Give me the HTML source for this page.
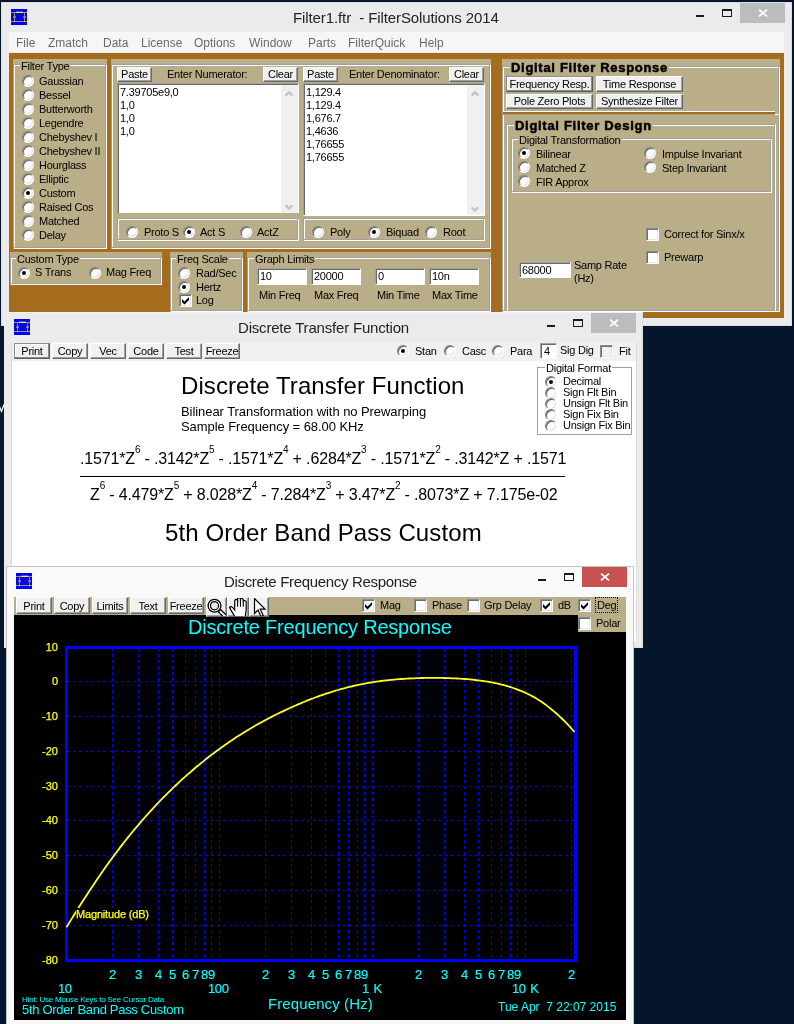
<!DOCTYPE html><html><head><meta charset="utf-8"><title>FilterSolutions</title><style>
html,body{margin:0;padding:0;background:#04152c;width:794px;height:1024px;overflow:hidden}
body{position:relative;font-family:"Liberation Sans",sans-serif}
div,span.t,span.m,span.ttl,span.h,span.big,span.s13,span.eq,span.yl,span.xl,span.xn,span.xa,span.pt,span.hint,span.dt{position:absolute;box-sizing:border-box;white-space:pre}
.t{font:11px/13px "Liberation Sans",sans-serif;color:#000;letter-spacing:-0.25px}
.m{font:12px/14px "Liberation Sans",sans-serif;color:#6a6a6a}
.ttl{font:15px/18px "Liberation Sans",sans-serif;color:#222}
.h{font:bold 13px/15px "Liberation Sans",sans-serif;color:#000;letter-spacing:0.7px;-webkit-text-stroke:0.5px #000}
.big{font:24px/28px "Liberation Sans",sans-serif;color:#000}
.s13{font:13px/15px "Liberation Sans",sans-serif;color:#000;letter-spacing:-0.065px}
.eq{font:16px/20px "Liberation Sans",sans-serif;color:#000;letter-spacing:-0.15px}
.eq sup{font-size:10px;line-height:0;vertical-align:11px;position:relative;letter-spacing:-0.3px}
.yl{font:11px/13px "Liberation Sans",sans-serif;color:#ffff10;-webkit-text-stroke:0.25px #ffff10}
.xl{font:13px/15px "Liberation Sans",sans-serif;color:#08ffff;letter-spacing:-0.31px}
.xn{font:13px/15px "Liberation Sans",sans-serif;color:#08ffff;word-spacing:1.5px;letter-spacing:-0.4px;-webkit-text-stroke:0.2px #08ffff}
.dt{font:12px/14px "Liberation Sans",sans-serif;color:#08ffff}
.xa{font:15px/18px "Liberation Sans",sans-serif;color:#08ffff}
.pt{font:20px/22px "Liberation Sans",sans-serif;color:#08ffff;letter-spacing:-0.2px}
.hint{font:8px/9px "Liberation Sans",sans-serif;color:#08ffff;letter-spacing:-0.2px}
.r{width:12px;height:12px;border-radius:50%;background:#fff;border:1px solid;border-color:#808080 #fff #fff #808080;box-shadow:inset 1px 1px 0 #606060,inset -1px -1px 0 #e0e0e0}
.r i{position:absolute;left:3px;top:3px;width:4px;height:4px;border-radius:50%;background:#000}
.c{width:13px;height:13px;background:#fff;border:1px solid;border-color:#8c8c8c #fff #fff #8c8c8c;box-shadow:inset 1px 1px 0 #6e6e6e,inset -1px -1px 0 #e6e6e6}
.b{background:#f0f0f0;border:1px solid;border-color:#fff #696969 #696969 #fff;box-shadow:inset -1px -1px 0 #a0a0a0;font:11px "Liberation Sans",sans-serif;letter-spacing:-0.25px;color:#000;text-align:center;overflow:hidden}
.bd{border-color:#8c8c8c #5a5a5a #5a5a5a #8c8c8c;box-shadow:inset -1px -1px 0 #8c8c8c,inset 1px 1px 0 #fff}
.f{background:#fff;border:1px solid;border-color:#a0a0a0 #fff #fff #a0a0a0;box-shadow:inset 1px 1px 0 #696969}
.g{border:1px solid #a0a0a0;box-shadow:1px 1px 0 #fff,inset 1px 1px 0 #fff}
.sb{right:0;top:1px;bottom:0;width:17px;background:#f0f0f0}
</style></head><body><div id="w" style="left:0;top:0;width:794px;height:1024px;will-change:transform">
<div class="" style="left:1px;top:2px;width:791px;height:324px;background:#ebebeb;border:1px solid #dcdcdc"></div>
<svg style="position:absolute;left:11px;top:9px" width="16" height="16" viewBox="0 0 16 16"><rect width="16" height="16" fill="#0000ff"/><path d="M0 3.5H16M0 12.5H16M3.5 3.5V12.5M13.5 3.5V12.5" stroke="#9c9650" stroke-width="1" fill="none"/><path d="M5 3.3H12" stroke="#ffff00" stroke-width="1.2"/><circle cx="3.5" cy="8" r="1.3" fill="#a8a050"/><circle cx="13.5" cy="8" r="1.3" fill="#a8a050"/><rect x="3" y="12" width="1" height="1" fill="#e0e020"/><rect x="13" y="12" width="1" height="1" fill="#e0e020"/></svg>
<span class="ttl" style="left:293px;top:9px;letter-spacing:-0.1px">Filter1.ftr  - FilterSolutions 2014</span>
<div class="" style="left:696px;top:15px;width:8px;height:2px;background:#1a1a1a"></div>
<div class="" style="left:722px;top:9px;width:10px;height:8px;border:1px solid #1a1a1a;border-top-width:2px"></div>
<div class="" style="left:740px;top:3px;width:45px;height:20px;background:#bcbcbc"></div>
<svg style="position:absolute;left:757.5px;top:9.0px" width="10" height="8" viewBox="0 0 10 8"><path d="M1 0.6L9 7.4M9 0.6L1 7.4" stroke="#fff" stroke-width="1.8"/></svg>
<div class="" style="left:9px;top:32px;width:775px;height:20px;background:#f5f6f7"></div>
<span class="m" style="left:16px;top:36px;">File</span>
<span class="m" style="left:48px;top:36px;">Zmatch</span>
<span class="m" style="left:103px;top:36px;">Data</span>
<span class="m" style="left:141px;top:36px;">License</span>
<span class="m" style="left:194px;top:36px;">Options</span>
<span class="m" style="left:249px;top:36px;">Window</span>
<span class="m" style="left:308px;top:36px;">Parts</span>
<span class="m" style="left:348px;top:36px;">FilterQuick</span>
<span class="m" style="left:419px;top:36px;">Help</span>
<div class="" style="left:9px;top:53px;width:775px;height:265px;background:#a66c1e"></div>
<div class="" style="left:13px;top:59px;width:94px;height:190px;background:#b9ae87"></div>
<div class="g" style="left:13px;top:64px;width:93px;height:184px;"><span class="t" style="left:6px;top:-5px;background:#b9ae87;padding:0 1px">Filter Type</span></div>
<div class="r" style="left:22px;top:75px"></div>
<span class="t" style="left:39px;top:75px;">Gaussian</span>
<div class="r" style="left:22px;top:89px"></div>
<span class="t" style="left:39px;top:89px;">Bessel</span>
<div class="r" style="left:22px;top:103px"></div>
<span class="t" style="left:39px;top:103px;">Butterworth</span>
<div class="r" style="left:22px;top:117px"></div>
<span class="t" style="left:39px;top:117px;">Legendre</span>
<div class="r" style="left:22px;top:131px"></div>
<span class="t" style="left:39px;top:131px;">Chebyshev I</span>
<div class="r" style="left:22px;top:145px"></div>
<span class="t" style="left:39px;top:145px;">Chebyshev II</span>
<div class="r" style="left:22px;top:159px"></div>
<span class="t" style="left:39px;top:159px;">Hourglass</span>
<div class="r" style="left:22px;top:173px"></div>
<span class="t" style="left:39px;top:173px;">Elliptic</span>
<div class="r" style="left:22px;top:187px"><i></i></div>
<span class="t" style="left:39px;top:187px;">Custom</span>
<div class="r" style="left:22px;top:201px"></div>
<span class="t" style="left:39px;top:201px;">Raised Cos</span>
<div class="r" style="left:22px;top:215px"></div>
<span class="t" style="left:39px;top:215px;">Matched</span>
<div class="r" style="left:22px;top:229px"></div>
<span class="t" style="left:39px;top:229px;">Delay</span>
<div class="" style="left:111px;top:59px;width:380px;height:190px;background:#b9ae87"></div>
<div class="g" style="left:111px;top:64px;width:379px;height:184px;"></div>
<div class="b" style="left:117px;top:67px;width:35px;height:15px;line-height:13px;">Paste</div>
<span class="t" style="left:167px;top:68px;">Enter Numerator:</span>
<div class="b" style="left:263px;top:67px;width:35px;height:15px;line-height:13px;">Clear</div>
<div class="f" style="left:117px;top:83px;width:182px;height:130px;border-bottom:none"><span class="t" style="left:2px;top:2px;line-height:13px">7.39705e9,0
1,0
1,0
1,0</span><div class="sb"><svg width="17" height="20" viewBox="0 0 17 20" style="position:absolute;left:0;top:0"><path d="M4.6 10.6L8 7.2L11.4 10.6" stroke="#c2c2c2" stroke-width="2.2" fill="none"/></svg><svg width="17" height="12" viewBox="0 0 17 12" style="position:absolute;left:0;bottom:0"><path d="M4.6 4.2L8 7.6L11.4 4.2" stroke="#c2c2c2" stroke-width="2.2" fill="none"/></svg></div></div>
<div class="b" style="left:303px;top:67px;width:35px;height:15px;line-height:13px;">Paste</div>
<span class="t" style="left:349px;top:68px;">Enter Denominator:</span>
<div class="b" style="left:449px;top:67px;width:35px;height:15px;line-height:13px;">Clear</div>
<div class="f" style="left:303px;top:83px;width:182px;height:133px;"><span class="t" style="left:2px;top:2px;line-height:13px">1,129.4
1,129.4
1,676.7
1,4636
1,76655
1,76655</span><div class="sb"><svg width="17" height="20" viewBox="0 0 17 20" style="position:absolute;left:0;top:0"><path d="M4.6 10.6L8 7.2L11.4 10.6" stroke="#c2c2c2" stroke-width="2.2" fill="none"/></svg><svg width="17" height="12" viewBox="0 0 17 12" style="position:absolute;left:0;bottom:0"><path d="M4.6 4.2L8 7.6L11.4 4.2" stroke="#c2c2c2" stroke-width="2.2" fill="none"/></svg></div></div>
<div class="g" style="left:117px;top:218px;width:181px;height:22px;"></div>
<div class="r" style="left:126px;top:226px"></div>
<span class="t" style="left:144px;top:226px;">Proto S</span>
<div class="r" style="left:183px;top:226px"><i></i></div>
<span class="t" style="left:200px;top:226px;">Act S</span>
<div class="r" style="left:240px;top:226px"></div>
<span class="t" style="left:257px;top:226px;">ActZ</span>
<div class="g" style="left:303px;top:218px;width:181px;height:22px;"></div>
<div class="r" style="left:312px;top:226px"></div>
<span class="t" style="left:330px;top:226px;">Poly</span>
<div class="r" style="left:368px;top:226px"><i></i></div>
<span class="t" style="left:386px;top:226px;">Biquad</span>
<div class="r" style="left:425px;top:226px"></div>
<span class="t" style="left:443px;top:226px;">Root</span>
<div class="" style="left:10px;top:252px;width:152px;height:33px;background:#b9ae87"></div>
<div class="g" style="left:10px;top:257px;width:151px;height:27px;"><span class="t" style="left:5px;top:-5px;background:#b9ae87;padding:0 1px">Custom Type</span></div>
<div class="r" style="left:18px;top:267px"><i></i></div>
<span class="t" style="left:35px;top:266px;">S Trans</span>
<div class="r" style="left:89px;top:267px"></div>
<span class="t" style="left:106px;top:266px;">Mag Freq</span>
<div class="" style="left:170px;top:252px;width:73px;height:60px;background:#b9ae87"></div>
<div class="g" style="left:170px;top:257px;width:72px;height:54px;"><span class="t" style="left:5px;top:-5px;background:#b9ae87;padding:0 1px">Freq Scale</span></div>
<div class="r" style="left:178px;top:267px"></div>
<span class="t" style="left:196px;top:267px;">Rad/Sec</span>
<div class="r" style="left:178px;top:281px"><i></i></div>
<span class="t" style="left:196px;top:281px;">Hertz</span>
<div class="c" style="left:179px;top:294px;background:#fff"><svg width="13" height="13" viewBox="0 0 13 13" style="position:absolute;left:-1px;top:-1px"><path d="M3 5L5.5 7.5L10 3V6L5.5 10.5L3 8Z" fill="#000"/></svg></div>
<span class="t" style="left:196px;top:294px;">Log</span>
<div class="" style="left:247px;top:252px;width:244px;height:60px;background:#b9ae87"></div>
<div class="g" style="left:247px;top:257px;width:243px;height:54px;"><span class="t" style="left:6px;top:-5px;background:#b9ae87;padding:0 1px">Graph Limits</span></div>
<div class="f" style="left:257px;top:268px;width:50px;height:17px;"><span class="t" style="left:2px;top:1px">10</span></div>
<div class="f" style="left:311px;top:268px;width:50px;height:17px;"><span class="t" style="left:2px;top:1px">20000</span></div>
<div class="f" style="left:375px;top:268px;width:50px;height:17px;"><span class="t" style="left:2px;top:1px">0</span></div>
<div class="f" style="left:429px;top:268px;width:50px;height:17px;"><span class="t" style="left:2px;top:1px">10n</span></div>
<span class="t" style="left:259px;top:289px;">Min Freq</span>
<span class="t" style="left:314px;top:289px;">Max Freq</span>
<span class="t" style="left:377px;top:289px;">Min Time</span>
<span class="t" style="left:432px;top:289px;">Max Time</span>
<div class="" style="left:502px;top:59px;width:278px;height:253px;background:#b9ae87"></div>
<div class="g" style="left:502px;top:66px;width:277px;height:245px;"><span class="h" style="left:7px;top:-7px;background:#b9ae87;padding:0 1px">Digital Filter Response</span></div>
<div class="" style="left:503px;top:111px;width:272px;height:1px;background:#fff"></div>
<div class="" style="left:503px;top:112px;width:272px;height:2px;background:#a66c1e"></div>
<div class="" style="left:503px;top:114px;width:272px;height:1px;background:#a0a0a0"></div>
<div class="" style="left:775px;top:114px;width:4px;height:1px;background:#fff"></div>
<div class="b bd" style="left:506px;top:76px;width:87px;height:16px;line-height:14px;">Frequency Resp.</div>
<div class="b" style="left:596px;top:76px;width:87px;height:16px;line-height:14px;">Time Response</div>
<div class="b" style="left:506px;top:94px;width:87px;height:15px;line-height:13px;">Pole Zero Plots</div>
<div class="b" style="left:596px;top:94px;width:87px;height:15px;line-height:13px;">Synthesize Filter</div>
<div class="g" style="left:506px;top:124px;width:269px;height:187px;border-bottom:none;box-shadow:1px 0 0 #fff,inset 1px 1px 0 #fff"><span class="h" style="left:7px;top:-7px;background:#b9ae87;padding:0 1px">Digital Filter Design</span></div>
<div class="g" style="left:511px;top:138px;width:260px;height:54px;"><span class="t" style="left:6px;top:-5px;background:#b9ae87;padding:0 1px">Digital Transformation</span></div>
<div class="r" style="left:518px;top:147px"><i></i></div>
<span class="t" style="left:536px;top:148px;">Bilinear</span>
<div class="r" style="left:518px;top:161px"></div>
<span class="t" style="left:536px;top:162px;">Matched Z</span>
<div class="r" style="left:518px;top:175px"></div>
<span class="t" style="left:536px;top:176px;">FIR Approx</span>
<div class="r" style="left:644px;top:147px"></div>
<span class="t" style="left:662px;top:148px;">Impulse Invariant</span>
<div class="r" style="left:644px;top:161px"></div>
<span class="t" style="left:662px;top:162px;">Step Invariant</span>
<div class="c" style="left:646px;top:228px;background:#fff"></div>
<span class="t" style="left:664px;top:228px;">Correct for Sinx/x</span>
<div class="c" style="left:646px;top:251px;background:#fff"></div>
<span class="t" style="left:664px;top:251px;">Prewarp</span>
<div class="f" style="left:519px;top:262px;width:52px;height:16px;"><span class="t" style="left:2px;top:1px">68000</span></div>
<span class="t" style="left:574px;top:259px;">Samp Rate</span>
<span class="t" style="left:574px;top:272px;">(Hz)</span>
<svg style="position:absolute;left:0;top:400px" width="4" height="16" viewBox="0 0 4 16"><path d="M-1 5.5L1.5 11.5L4 4.5" stroke="#f4f4f4" stroke-width="1.3" fill="none"/></svg>
<div class="" style="left:4px;top:312px;width:639px;height:336px;background:#ebebeb;border:1px solid #dcdcdc;border-color:#f2f2f2 #dcdcdc #dcdcdc #eeeeee"></div>
<svg style="position:absolute;left:14px;top:319px" width="16" height="16" viewBox="0 0 16 16"><rect width="16" height="16" fill="#0000ff"/><path d="M0 3.5H16M0 12.5H16M3.5 3.5V12.5M13.5 3.5V12.5" stroke="#9c9650" stroke-width="1" fill="none"/><path d="M5 3.3H12" stroke="#ffff00" stroke-width="1.2"/><circle cx="3.5" cy="8" r="1.3" fill="#a8a050"/><circle cx="13.5" cy="8" r="1.3" fill="#a8a050"/><rect x="3" y="12" width="1" height="1" fill="#e0e020"/><rect x="13" y="12" width="1" height="1" fill="#e0e020"/></svg>
<span class="ttl" style="left:238px;top:319px;letter-spacing:-0.19px">Discrete Transfer Function</span>
<div class="" style="left:547px;top:325px;width:8px;height:2px;background:#1a1a1a"></div>
<div class="" style="left:573px;top:319px;width:10px;height:8px;border:1px solid #1a1a1a;border-top-width:2px"></div>
<div class="" style="left:591px;top:313px;width:45px;height:20px;background:#bcbcbc"></div>
<svg style="position:absolute;left:608.5px;top:319.0px" width="10" height="8" viewBox="0 0 10 8"><path d="M1 0.6L9 7.4M9 0.6L1 7.4" stroke="#fff" stroke-width="1.8"/></svg>
<div class="" style="left:12px;top:342px;width:624px;height:19px;background:#f0f0f0"></div>
<div class="b bd" style="left:14px;top:343px;width:36px;height:16px;line-height:14px;">Print</div>
<div class="b" style="left:52px;top:343px;width:36px;height:16px;line-height:14px;">Copy</div>
<div class="b" style="left:90px;top:343px;width:36px;height:16px;line-height:14px;">Vec</div>
<div class="b" style="left:128px;top:343px;width:36px;height:16px;line-height:14px;">Code</div>
<div class="b" style="left:166px;top:343px;width:36px;height:16px;line-height:14px;">Test</div>
<div class="b" style="left:204px;top:343px;width:36px;height:16px;line-height:14px;">Freeze</div>
<div class="r" style="left:397px;top:345px"><i></i></div>
<span class="t" style="left:415px;top:345px;">Stan</span>
<div class="r" style="left:444px;top:345px"></div>
<span class="t" style="left:462px;top:345px;">Casc</span>
<div class="r" style="left:492px;top:345px"></div>
<span class="t" style="left:510px;top:345px;">Para</span>
<div class="f" style="left:540px;top:343px;width:17px;height:16px;"><span class="t" style="left:3px;top:1px">4</span></div>
<span class="t" style="left:560px;top:344px;">Sig Dig</span>
<div class="c" style="left:600px;top:345px;background:#f0f0f0"></div>
<span class="t" style="left:619px;top:345px;">Fit</span>
<div class="" style="left:11px;top:342px;width:1px;height:299px;background:#dcdcdc"></div>
<div class="" style="left:636px;top:342px;width:1px;height:299px;background:#dcdcdc"></div>
<div class="" style="left:12px;top:361px;width:624px;height:280px;background:#fff"></div>
<span class="big" style="left:181px;top:372px;letter-spacing:0.08px">Discrete Transfer Function</span>
<span class="s13" style="left:181px;top:404px;">Bilinear Transformation with no Prewarping</span>
<span class="s13" style="left:181px;top:419px;">Sample Frequency = 68.00 KHz</span>
<span class="eq" style="left:80px;top:449px;">.1571*Z<sup>6</sup> - .3142*Z<sup>5</sup> - .1571*Z<sup>4</sup> + .6284*Z<sup>3</sup> - .1571*Z<sup>2</sup> - .3142*Z + .1571</span>
<div class="" style="left:80px;top:476px;width:485px;height:1px;background:#000"></div>
<span class="eq" style="left:90px;top:485px;">Z<sup>6</sup> - 4.479*Z<sup>5</sup> + 8.028*Z<sup>4</sup> - 7.284*Z<sup>3</sup> + 3.47*Z<sup>2</sup> - .8073*Z + 7.175e-02</span>
<span class="big" style="left:165px;top:519px;letter-spacing:0.13px">5th Order Band Pass Custom</span>
<div class="g" style="left:537px;top:367px;width:95px;height:68px;border-color:#a0a0a0;box-shadow:none"><span class="t" style="left:7px;top:-6px;background:#fff;padding:0 1px">Digital Format</span></div>
<div class="r" style="left:545px;top:376px"><i></i></div>
<span class="t" style="left:563px;top:375px;">Decimal</span>
<div class="r" style="left:545px;top:387px"></div>
<span class="t" style="left:563px;top:386px;">Sign Flt Bin</span>
<div class="r" style="left:545px;top:398px"></div>
<span class="t" style="left:563px;top:397px;">Unsign Flt Bin</span>
<div class="r" style="left:545px;top:409px"></div>
<span class="t" style="left:563px;top:408px;">Sign Fix Bin</span>
<div class="r" style="left:545px;top:420px"></div>
<span class="t" style="left:563px;top:419px;">Unsign Fix Bin</span>
<div class="" style="left:6px;top:566px;width:628px;height:460px;background:#f9f9f9;border:1px solid #c4c4c4"></div>
<svg style="position:absolute;left:16px;top:573px" width="16" height="16" viewBox="0 0 16 16"><rect width="16" height="16" fill="#0000ff"/><path d="M0 3.5H16M0 12.5H16M3.5 3.5V12.5M13.5 3.5V12.5" stroke="#9c9650" stroke-width="1" fill="none"/><path d="M5 3.3H12" stroke="#ffff00" stroke-width="1.2"/><circle cx="3.5" cy="8" r="1.3" fill="#a8a050"/><circle cx="13.5" cy="8" r="1.3" fill="#a8a050"/><rect x="3" y="12" width="1" height="1" fill="#e0e020"/><rect x="13" y="12" width="1" height="1" fill="#e0e020"/></svg>
<span class="ttl" style="left:224px;top:573px;letter-spacing:-0.33px">Discrete Frequency Response</span>
<div class="" style="left:538px;top:579px;width:8px;height:2px;background:#1a1a1a"></div>
<div class="" style="left:564px;top:573px;width:10px;height:8px;border:1px solid #1a1a1a;border-top-width:2px"></div>
<div class="" style="left:582px;top:567px;width:45px;height:20px;background:#c75050"></div>
<svg style="position:absolute;left:599.5px;top:573.0px" width="10" height="8" viewBox="0 0 10 8"><path d="M1 0.6L9 7.4M9 0.6L1 7.4" stroke="#fff" stroke-width="1.8"/></svg>
<div class="" style="left:14px;top:597px;width:612px;height:18px;background:#b9ae87"></div>
<div class="b" style="left:16px;top:597px;width:36px;height:17px;line-height:15px;padding-top:1px">Print</div>
<div class="b" style="left:54px;top:597px;width:36px;height:17px;line-height:15px;padding-top:1px">Copy</div>
<div class="b" style="left:92px;top:597px;width:36px;height:17px;line-height:15px;padding-top:1px">Limits</div>
<div class="b" style="left:130px;top:597px;width:36px;height:17px;line-height:15px;padding-top:1px">Text</div>
<div class="b" style="left:168px;top:597px;width:36px;height:17px;line-height:15px;padding-top:1px">Freeze</div>
<div class="c" style="left:362px;top:599px;background:#fff"><svg width="13" height="13" viewBox="0 0 13 13" style="position:absolute;left:-1px;top:-1px"><path d="M3 5L5.5 7.5L10 3V6L5.5 10.5L3 8Z" fill="#000"/></svg></div>
<span class="t" style="left:380px;top:599px;">Mag</span>
<div class="c" style="left:414px;top:599px;background:#fff"></div>
<span class="t" style="left:432px;top:599px;">Phase</span>
<div class="c" style="left:467px;top:599px;background:#fff"></div>
<span class="t" style="left:484px;top:599px;">Grp Delay</span>
<div class="c" style="left:540px;top:599px;background:#fff"><svg width="13" height="13" viewBox="0 0 13 13" style="position:absolute;left:-1px;top:-1px"><path d="M3 5L5.5 7.5L10 3V6L5.5 10.5L3 8Z" fill="#000"/></svg></div>
<span class="t" style="left:558px;top:599px;">dB</span>
<div class="c" style="left:578px;top:599px;background:#fff"><svg width="13" height="13" viewBox="0 0 13 13" style="position:absolute;left:-1px;top:-1px"><path d="M3 5L5.5 7.5L10 3V6L5.5 10.5L3 8Z" fill="#000"/></svg></div>
<span class="t" style="left:597px;top:599px;">Deg</span>
<div class="" style="left:595px;top:597px;width:23px;height:16px;border:1px dotted #000"></div>
<div class="" style="left:14px;top:615px;width:612px;height:405px;background:#000"></div>
<div class="" style="left:578px;top:615px;width:48px;height:17px;background:#b9ae87"></div>
<div class="c" style="left:578px;top:617px;background:#fff"></div>
<span class="t" style="left:596px;top:617px;">Polar</span>
<div class="b" style="left:206px;top:597px;width:21px;height:20px"><svg width="20" height="20" viewBox="0 0 20 20" style="position:absolute;left:0;top:-1px"><circle cx="7.5" cy="8.7" r="6.4" fill="#fff" stroke="#000" stroke-width="1.3"/><circle cx="7.5" cy="8.7" r="4.1" fill="#e8e8e8" stroke="#000" stroke-width="1.2"/><path d="M12.2 13.4L20 21.2" stroke="#000" stroke-width="4.4"/><path d="M12.9 14.1L20 21.2" stroke="#fff" stroke-width="2"/></svg></div>
<div class="b" style="left:227px;top:597px;width:22px;height:20px"><svg width="20" height="20" viewBox="0 0 20 20" style="position:absolute;left:0;top:-1px"><g transform="translate(-0.2,-1.6) scale(1.15,1.13)"><path d="M6.5 19.5 L3 13.5 L1.5 10.5 Q2.5 9 4.5 11 L6 13 V4.5 Q7.2 2.5 8.5 4.5 V3 Q9.8 1 11 3 V3.5 Q12.3 1.8 13.5 3.8 V5 Q14.8 3.8 16 5.5 V13 L15 19.5 Z" fill="#fff" stroke="#000" stroke-width="1.05"/><path d="M8.5 4.5V10M11 3.5V10M13.5 4.5V10" stroke="#000" stroke-width="0.95"/></g></svg></div>
<div class="b" style="left:249px;top:597px;width:20px;height:20px"><svg width="20" height="20" viewBox="0 0 20 20" style="position:absolute;left:0;top:-1px"><path d="M4.5 1.5 V16.5 L8 13 L11 19.5 L13.2 18.5 L10.2 12.2 H15 Z" fill="#fff" stroke="#000" stroke-width="1.2"/></svg></div>
<svg style="position:absolute;left:0;top:0" width="794" height="1024" viewBox="0 0 794 1024"><path d="M112.5 647.5V960.5M138.5 647.5V960.5M158.5 647.5V960.5M172.5 647.5V960.5M185.5 647.5V960.5M195.5 647.5V960.5M204.5 647.5V960.5M211.5 647.5V960.5M219.5 647.5V960.5M265.5 647.5V960.5M291.5 647.5V960.5M311.5 647.5V960.5M325.5 647.5V960.5M338.5 647.5V960.5M348.5 647.5V960.5M357.5 647.5V960.5M364.5 647.5V960.5M372.5 647.5V960.5M418.5 647.5V960.5M444.5 647.5V960.5M464.5 647.5V960.5M478.5 647.5V960.5M491.5 647.5V960.5M501.5 647.5V960.5M510.5 647.5V960.5M517.5 647.5V960.5M525.5 647.5V960.5M571.5 647.5V960.5M66.5 681.5H575.5M66.5 716.5H575.5M66.5 751.5H575.5M66.5 786.5H575.5M66.5 820.5H575.5M66.5 855.5H575.5M66.5 890.5H575.5M66.5 925.5H575.5" stroke="#0000ff" stroke-width="1" stroke-dasharray="3 3" fill="none" shape-rendering="crispEdges"/><rect x="66.5" y="647.5" width="509.0" height="313.0" fill="none" stroke="#0000ff" stroke-width="3"/><polyline points="66.5,927.2 69.0,923.1 71.6,918.9 74.1,914.9 76.7,910.8 79.2,906.8 81.7,902.8 84.3,898.8 86.8,894.9 89.3,891.0 91.9,887.2 94.4,883.4 97.0,879.6 99.5,875.9 102.0,872.3 104.6,868.6 107.1,865.1 109.6,861.5 112.2,858.0 114.7,854.6 117.3,851.2 119.8,847.9 122.3,844.6 124.9,841.3 127.4,838.1 129.9,835.0 132.5,831.8 135.0,828.8 137.6,825.8 140.1,822.8 142.6,819.9 145.2,817.0 147.7,814.1 150.3,811.3 152.8,808.6 155.3,805.9 157.9,803.2 160.4,800.5 162.9,797.9 165.5,795.4 168.0,792.8 170.6,790.4 173.1,787.9 175.6,785.5 178.2,783.1 180.7,780.7 183.2,778.4 185.8,776.1 188.3,773.9 190.9,771.7 193.4,769.5 195.9,767.3 198.5,765.2 201.0,763.1 203.6,761.1 206.1,759.0 208.6,757.0 211.2,755.1 213.7,753.2 216.2,751.3 218.8,749.4 221.3,747.5 223.9,745.7 226.4,744.0 228.9,742.2 231.5,740.5 234.0,738.8 236.5,737.1 239.1,735.5 241.6,733.9 244.2,732.3 246.7,730.8 249.2,729.2 251.8,727.7 254.3,726.2 256.8,724.8 259.4,723.4 261.9,722.0 264.5,720.6 267.0,719.2 269.5,717.9 272.1,716.6 274.6,715.3 277.2,714.0 279.7,712.8 282.2,711.6 284.8,710.4 287.3,709.2 289.8,708.0 292.4,706.9 294.9,705.7 297.5,704.6 300.0,703.6 302.5,702.5 305.1,701.5 307.6,700.4 310.1,699.4 312.7,698.5 315.2,697.5 317.8,696.6 320.3,695.7 322.8,694.8 325.4,693.9 327.9,693.1 330.4,692.3 333.0,691.5 335.5,690.7 338.1,690.0 340.6,689.2 343.1,688.5 345.7,687.9 348.2,687.2 350.8,686.6 353.3,686.0 355.8,685.4 358.4,684.9 360.9,684.4 363.4,683.9 366.0,683.4 368.5,682.9 371.1,682.5 373.6,682.1 376.1,681.7 378.7,681.3 381.2,681.0 383.7,680.7 386.3,680.4 388.8,680.1 391.4,679.8 393.9,679.6 396.4,679.4 399.0,679.2 401.5,679.0 404.1,678.8 406.6,678.6 409.1,678.5 411.7,678.4 414.2,678.3 416.7,678.2 419.3,678.1 421.8,678.0 424.4,677.9 426.9,677.9 429.4,677.9 432.0,677.9 434.5,677.9 437.0,677.9 439.6,677.9 442.1,677.9 444.7,678.0 447.2,678.1 449.7,678.1 452.3,678.3 454.8,678.4 457.3,678.5 459.9,678.7 462.4,678.8 465.0,679.0 467.5,679.2 470.0,679.4 472.6,679.7 475.1,680.0 477.7,680.3 480.2,680.6 482.7,680.9 485.3,681.3 487.8,681.7 490.3,682.2 492.9,682.7 495.4,683.2 498.0,683.7 500.5,684.3 503.0,684.9 505.6,685.6 508.1,686.3 510.6,687.1 513.2,688.0 515.7,688.8 518.3,689.8 520.8,690.8 523.3,691.9 525.9,693.0 528.4,694.2 530.9,695.5 533.5,696.9 536.0,698.3 538.6,699.9 541.1,701.5 543.6,703.3 546.2,705.1 548.7,707.1 551.3,709.2 553.9,711.4 556.7,713.8 559.5,716.3 562.3,719.0 565.3,721.9 568.3,725.0 571.3,728.4 574.5,732.0" fill="none" stroke="#ffff20" stroke-width="1.8"/></svg>
<span class="yl" style="left:30px;top:641px;width:28px;text-align:right">10</span>
<span class="yl" style="left:30px;top:675px;width:28px;text-align:right">0</span>
<span class="yl" style="left:30px;top:710px;width:28px;text-align:right">-10</span>
<span class="yl" style="left:30px;top:745px;width:28px;text-align:right">-20</span>
<span class="yl" style="left:30px;top:780px;width:28px;text-align:right">-30</span>
<span class="yl" style="left:30px;top:814px;width:28px;text-align:right">-40</span>
<span class="yl" style="left:30px;top:849px;width:28px;text-align:right">-50</span>
<span class="yl" style="left:30px;top:884px;width:28px;text-align:right">-60</span>
<span class="yl" style="left:30px;top:919px;width:28px;text-align:right">-70</span>
<span class="yl" style="left:30px;top:954px;width:28px;text-align:right">-80</span>
<span class="yl" style="left:76px;top:908px;letter-spacing:-0.17px;background:#000;padding-right:1px">Magnitude (dB)</span>
<span class="pt" style="left:188px;top:616px;">Discrete Frequency Response</span>
<span class="xn" style="left:109px;top:967px;">2</span>
<span class="xn" style="left:135px;top:967px;">3</span>
<span class="xn" style="left:155px;top:967px;">4</span>
<span class="xn" style="left:169px;top:967px;">5</span>
<span class="xn" style="left:182px;top:967px;">6</span>
<span class="xn" style="left:192px;top:967px;">7</span>
<span class="xn" style="left:201px;top:967px;">8</span>
<span class="xn" style="left:208px;top:967px;">9</span>
<span class="xn" style="left:262px;top:967px;">2</span>
<span class="xn" style="left:288px;top:967px;">3</span>
<span class="xn" style="left:308px;top:967px;">4</span>
<span class="xn" style="left:322px;top:967px;">5</span>
<span class="xn" style="left:335px;top:967px;">6</span>
<span class="xn" style="left:345px;top:967px;">7</span>
<span class="xn" style="left:354px;top:967px;">8</span>
<span class="xn" style="left:361px;top:967px;">9</span>
<span class="xn" style="left:415px;top:967px;">2</span>
<span class="xn" style="left:441px;top:967px;">3</span>
<span class="xn" style="left:461px;top:967px;">4</span>
<span class="xn" style="left:475px;top:967px;">5</span>
<span class="xn" style="left:488px;top:967px;">6</span>
<span class="xn" style="left:498px;top:967px;">7</span>
<span class="xn" style="left:507px;top:967px;">8</span>
<span class="xn" style="left:514px;top:967px;">9</span>
<span class="xn" style="left:568px;top:967px;">2</span>
<span class="xn" style="left:58px;top:981px;">10</span>
<span class="xn" style="left:208px;top:981px;">100</span>
<span class="xn" style="left:362px;top:981px;">1 K</span>
<span class="xn" style="left:512px;top:981px;">10 K</span>
<span class="xa" style="left:268px;top:995px;letter-spacing:0.1px">Frequency (Hz)</span>
<span class="hint" style="left:22px;top:995px;">Hint: Use Mouse Keys to See Cursor Data</span>
<span class="xl" style="left:22px;top:1002px;">5th Order Band Pass Custom</span>
<span class="dt" style="left:498px;top:1000px;">Tue Apr  7 22:07 2015</span>
</div></body></html>
